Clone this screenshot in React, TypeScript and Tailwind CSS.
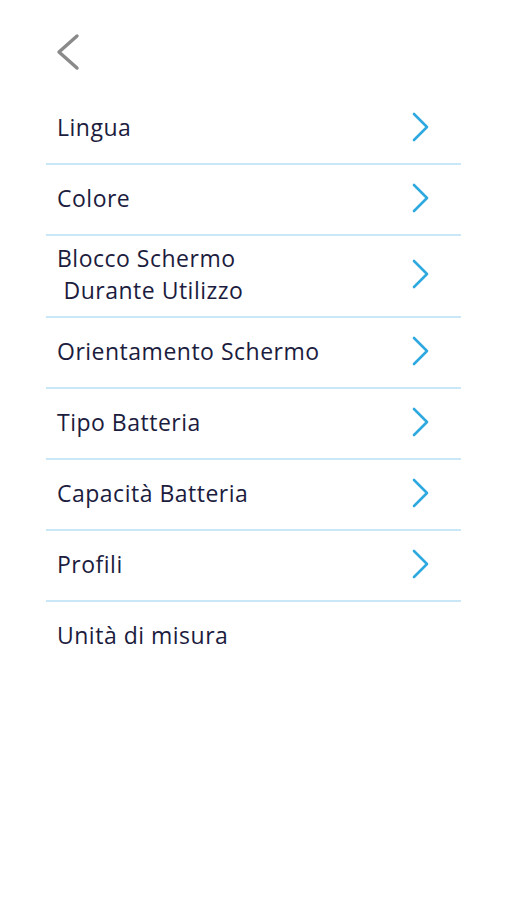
import React from "react";

const items: { label: React.ReactNode; arrow: boolean; tall?: boolean }[] = [
  { label: "Lingua", arrow: true },
  { label: "Colore", arrow: true },
  {
    label: (
      <>
        Blocco Schermo
        <br />
        {"\u00a0Durante Utilizzo"}
      </>
    ),
    arrow: true,
    tall: true,
  },
  { label: "Orientamento Schermo", arrow: true },
  { label: "Tipo Batteria", arrow: true },
  { label: "Capacità Batteria", arrow: true },
  { label: "Profili", arrow: true },
  { label: "Unità di misura", arrow: false },
];

const RightChevron = () => (
  <svg width="20" height="30" viewBox="0 0 20 30" fill="none">
    <polyline
      points="4,2 17,15 4,28"
      stroke="#2ea9df"
      strokeWidth="2.6"
      strokeLinecap="round"
      strokeLinejoin="round"
    />
  </svg>
);

export default function App() {
  return (
    <div
      className="w-[506px] h-[900px] bg-white pl-[46px] pr-[45px] text-[#1c1c3e]"
      style={{ fontFamily: '"Open Sans", "Liberation Sans", sans-serif' }}
    >
      {/* Header */}
      <div className="h-[94px] pt-[32px] pl-[10px]">
        <svg width="26" height="40" viewBox="0 0 26 40" fill="none">
          <polyline
            points="21,4 3,20 21,36"
            stroke="#8a8a8a"
            strokeWidth="3.4"
            strokeLinecap="round"
            strokeLinejoin="round"
          />
        </svg>
      </div>

      {/* List */}
      <div>
        {items.map((item, i) => {
          const last = i === items.length - 1;
          return (
            <div
              key={i}
              className={`flex items-center justify-between pl-[11px] pr-[31px] ${
                item.tall ? "h-[82px]" : "h-[71px]"
              } ${last ? "pb-[6px]" : "pb-[4px] border-b-2 border-[#c9e7f7]"}`}
            >
              <div className="text-[23px] leading-[32px] tracking-[0.5px]">
                {item.label}
              </div>
              {item.arrow && <RightChevron />}
            </div>
          );
        })}
      </div>
    </div>
  );
}
